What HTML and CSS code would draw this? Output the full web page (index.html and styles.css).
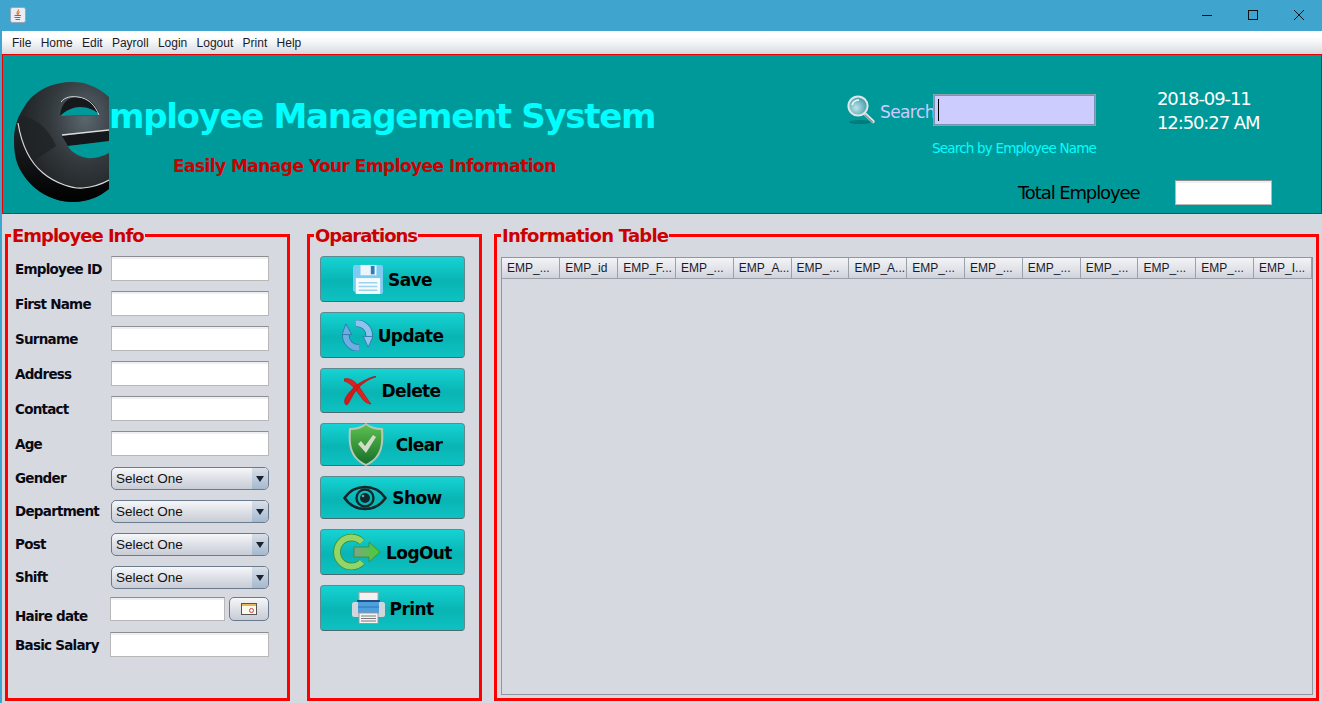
FILE: index.html
```html
<!DOCTYPE html>
<html lang="en">
<head>
    <meta charset="UTF-8">
    <title>Employee Management System</title>
    <link rel="stylesheet" href="styles.css">
</head>
<body>
    <div class="title-bar">
        <svg class="java-icon" width="16" height="16" viewBox="0 0 16 16">
            <rect x="0.5" y="0.5" width="15" height="15" rx="2" fill="#e9edf3" stroke="#9aa5b3"/>
            <path d="M8 2.5c1.5 1.5-1.5 2.5-1 4 .2.6.8 1 1 1.4-.2-1.4 1.8-2 1-3.6" fill="none" stroke="#e0702a" stroke-width="1.1"/>
            <path d="M4.5 8.5h6.5M4.5 10.5h6M5.5 12.5h4.5" stroke="#4a78a8" stroke-width="1"/>
        </svg>
        <div class="window-btns">
            <svg width="12" height="12" viewBox="0 0 12 12"><path d="M1 6.5h10" stroke="#111" fill="none"/></svg>
            <svg width="12" height="12" viewBox="0 0 12 12"><rect x="1.5" y="1.5" width="9" height="9" stroke="#111" fill="none"/></svg>
            <svg width="12" height="12" viewBox="0 0 12 12"><path d="M1 1l10 10M11 1L1 11" stroke="#111" fill="none"/></svg>
        </div>
    </div>

    <nav class="menu-bar">
        <span>File</span>
        <span>Home</span>
        <span>Edit</span>
        <span>Payroll</span>
        <span>Login</span>
        <span>Logout</span>
        <span>Print</span>
        <span>Help</span>
    </nav>

    <header class="banner">
        <svg class="logo" width="95" height="120" viewBox="0 0 95 120">
            <defs>
                <radialGradient id="logoBody" cx="0.75" cy="0.3" r="0.75">
                    <stop offset="0" stop-color="#5a666e"/>
                    <stop offset="0.5" stop-color="#33393d"/>
                    <stop offset="1" stop-color="#1c1f21"/>
                </radialGradient>
                <linearGradient id="logoBottom" x1="0" y1="0" x2="0" y2="1">
                    <stop offset="0" stop-color="#22262a"/>
                    <stop offset="1" stop-color="#000"/>
                </linearGradient>
            </defs>
            <path d="M95 15C83 4 70 0 59 0 40 0 20 7 9 27 2 38 0 48 0 58c0 14 2 24 8 33 12 19 33 29 51 29 14 0 26-5 36-13z" fill="url(#logoBody)"/>
            <path d="M5 34c14 0 30 12 37 30L12 84C3 68 1 48 5 34z" fill="#1f2326" opacity="0.8"/>
            <path d="M4 41C8 65 18 82 29 91C42 102 60 107 69 106C79 105 88 102 95 98V107C85 115 73 120 59 120 35 120 13 105 4 82 0 70-1 52 4 41z" fill="url(#logoBottom)"/>
            <path d="M46 34c1-12 7-19 18-19 10 0 18 7 22 18z" fill="#16191b"/>
            <path d="M46 34c6-6 14-9 20-9 8 0 15 3 20 8z" fill="#009999"/>
            <path d="M47 20c4-5 10-6 17-5 10 1 17 8 21 18" fill="none" stroke="#d8dcdf" stroke-width="1"/>
            <path d="M48 54l47-6v12l-41 4z" fill="#14181a"/>
            <path d="M48 53l47-5" fill="none" stroke="#d8dcdf" stroke-width="1.4"/>
            <path d="M54 64l41-5v12c-6 3-14 6-22 5-9-2-16-6-19-12z" fill="#009999"/>
            <path d="M4 41C8 65 18 82 29 91C42 102 60 107 69 106C79 105 88 102 95 98" fill="none" stroke="#d8dcdf" stroke-width="1.2"/>
        </svg>
        <div class="brand">
            <h1>mployee Management System</h1>
            <p class="tagline">Easily Manage Your Employee Information</p>
        </div>
        <div class="tools">
            <div class="tools-top">
                <div class="search-block">
                    <div class="search-row">
                        <svg width="30" height="30" viewBox="0 0 30 30">
                            <defs>
                                <radialGradient id="lens" cx="0.4" cy="0.6" r="0.7">
                                    <stop offset="0" stop-color="#bfe4ea"/>
                                    <stop offset="1" stop-color="#2f8f9e"/>
                                </radialGradient>
                            </defs>
                            <ellipse cx="14" cy="27" rx="11" ry="2" fill="#007a7a"/>
                            <path d="M18.5 18.5L27 26.5" stroke="#e3e3e3" stroke-width="3.4" stroke-linecap="round"/>
                            <path d="M19 20l7.5 7" stroke="#8a8a8a" stroke-width="1.2" stroke-linecap="round"/>
                            <circle cx="12" cy="11" r="9.6" fill="url(#lens)" stroke="#dfe6e8" stroke-width="2"/>
                            <path d="M6 10c1-3 4-5 7-5" stroke="#e8fbff" stroke-width="1.6" fill="none"/>
                        </svg>
                        <label class="search-label" for="search">Search</label>
                        <div class="search-box">
                            <input id="search" type="text">
                            <span class="caret"></span>
                        </div>
                    </div>
                    <div class="search-hint">Search by Employee Name</div>
                </div>
                <div class="clock">
                    <div>2018-09-11</div>
                    <div>12:50:27 AM</div>
                </div>
            </div>
            <div class="total-row">
                <label for="total">Total Employee</label>
                <input id="total" class="field total-field" type="text">
            </div>
        </div>
    </header>

    <main class="content">
        <fieldset class="panel panel-info">
            <legend>Employee Info</legend>
            <div class="text-rows">
                <div class="form-row"><label>Employee ID</label><input class="field" type="text"></div>
                <div class="form-row"><label>First Name</label><input class="field" type="text"></div>
                <div class="form-row"><label>Surname</label><input class="field" type="text"></div>
                <div class="form-row"><label>Address</label><input class="field" type="text"></div>
                <div class="form-row"><label>Contact</label><input class="field" type="text"></div>
                <div class="form-row"><label>Age</label><input class="field" type="text"></div>
            </div>
            <div class="combo-rows">
                <div class="form-row"><label>Gender</label><div class="combo"><span>Select One</span><b></b></div></div>
                <div class="form-row"><label>Department</label><div class="combo"><span>Select One</span><b></b></div></div>
                <div class="form-row"><label>Post</label><div class="combo"><span>Select One</span><b></b></div></div>
                <div class="form-row"><label>Shift</label><div class="combo"><span>Select One</span><b></b></div></div>
            </div>
            <div class="date-row">
                <label>Haire date</label>
                <input class="field date-field" type="text">
                <button class="date-btn" type="button">
                    <svg width="16" height="12" viewBox="0 0 16 12">
                        <rect x="0.5" y="0.5" width="15" height="11" fill="#fbf8ee" stroke="#555"/>
                        <rect x="1" y="1" width="14" height="2" fill="#e8b64c"/>
                        <circle cx="10.5" cy="7.5" r="2" fill="none" stroke="#d8383a"/>
                    </svg>
                </button>
            </div>
            <div class="salary-row">
                <label>Basic Salary</label>
                <input class="field salary-field" type="text">
            </div>
        </fieldset>

        <fieldset class="panel panel-ops">
            <legend>Oparations</legend>
            <button class="op-btn" type="button">
                <svg width="30" height="30" viewBox="0 0 32 32">
                    <path d="M2 1h28c1 0 2 1 2 2v27c0 1-1 2-2 2H4l-4-4V3c0-1 1-2 2-2z" fill="#7ccbf0"/>
                    <rect x="8" y="1" width="17" height="11" fill="#eaf6fc"/>
                    <rect x="19" y="2" width="4" height="9" fill="#2f7db8"/>
                    <rect x="3" y="15" width="26" height="17" fill="#f5fafd"/>
                    <path d="M6 20h20M6 24h20M6 28h20" stroke="#9fd2ee" stroke-width="1.4"/>
                </svg>
                <span>Save</span>
            </button>
            <button class="op-btn" type="button">
                <svg width="31" height="31" viewBox="0 0 32 32">
                    <path d="M14 3.500A12.500 12.500 0 0 1 28 17" fill="none" stroke="#2f6ea4" stroke-width="7.500"/>
                    <path d="M18 28.500A12.500 12.500 0 0 1 4 15" fill="none" stroke="#2f6ea4" stroke-width="7.500"/>
                    <path d="M14 3.500A12.500 12.500 0 0 1 28 17" fill="none" stroke="#8cc4ee" stroke-width="6"/>
                    <path d="M18 28.500A12.500 12.500 0 0 1 4 15" fill="none" stroke="#6aaee2" stroke-width="6"/>
                    <path d="M22 17h10l-5 11z" fill="#8cc4ee" stroke="#2f6ea4" stroke-width="0.800"/>
                    <path d="M0 15h10L4 4z" fill="#6aaee2" stroke="#2f6ea4" stroke-width="0.800"/>
                </svg>
                <span>Update</span>
            </button>
            <button class="op-btn btn-45" type="button">
                <svg width="32" height="30" viewBox="0 0 32 30">
                    <path d="M0 3C6 1 12 6 16 12C20 18 24 24 27 28C24 28 20 26 17 21C13 16 8 7 0 5z" fill="#e01f1f" stroke="#a01010" stroke-width="0.5"/>
                    <path d="M32 1C24 3 16 9 11 16C8 20 6 26 3 29C1 29 0 26 1 23C3 18 9 12 14 8C20 4 27 1 32 0z" fill="#d81818" stroke="#a01010" stroke-width="0.5"/>
                </svg>
                <span>Delete</span>
            </button>
            <button class="op-btn btn-43" type="button">
                <svg class="icon-tall" width="36" height="43" viewBox="0 0 36 43">
                    <defs>
                        <linearGradient id="shield" x1="0" y1="0" x2="0" y2="1">
                            <stop offset="0" stop-color="#5cc04e"/>
                            <stop offset="1" stop-color="#16702a"/>
                        </linearGradient>
                    </defs>
                    <path d="M18 0c5 4 11 5 17 5 1 15 1 30-17 38C0 35 0 20 1 5c6 0 12-1 17-5z" fill="#b8c8b8"/>
                    <path d="M18 2c5 4 10 5 15 5 1 14 0 27-15 34C3 34 2 21 3 7c5 0 10-1 15-5z" fill="url(#shield)"/>
                    <path d="M10 21l3-3 4 5 8-11 3 2-10 16z" fill="#d2ddc8"/>
                </svg>
                <span class="clear-text">Clear</span>
            </button>
            <button class="op-btn btn-43" type="button">
                <svg width="44" height="26" viewBox="0 0 44 26">
                    <path d="M1.5 13C7 5 14 2 22 2s15 3 20.5 11C37 21 30 24 22 24S7 21 1.5 13z" fill="none" stroke="#14282c" stroke-width="2.6"/>
                    <circle cx="22" cy="13" r="8.5" fill="none" stroke="#14282c" stroke-width="2.4"/>
                    <circle cx="22" cy="13" r="5" fill="#14282c"/>
                    <circle cx="20" cy="11" r="1.3" fill="#5aa"/>
                </svg>
                <span>Show</span>
            </button>
            <button class="op-btn" type="button">
                <svg width="48" height="36" viewBox="0 0 48 36">
                    <defs>
                        <linearGradient id="exitArrow" x1="0" y1="0" x2="1" y2="0">
                            <stop offset="0" stop-color="#7fa58a"/>
                            <stop offset="1" stop-color="#45cf2c"/>
                        </linearGradient>
                    </defs>
                    <path d="M29 8A14.5 14.5 0 1 0 29 28" fill="none" stroke="#3e8a30" stroke-width="7.5"/>
                    <path d="M29 8A14.5 14.5 0 1 0 29 28" fill="none" stroke="#92d668" stroke-width="6"/>
                    <path d="M21 13h15V8l11 10-11 10v-5H21z" fill="url(#exitArrow)" stroke="#3e8a30" stroke-width="0.8"/>
                </svg>
                <span>LogOut</span>
            </button>
            <button class="op-btn" type="button">
                <svg width="33" height="32" viewBox="0 0 33 32">
                    <rect x="7" y="0.5" width="19" height="10" fill="#f2f2f2" stroke="#aaa"/>
                    <rect x="5" y="8" width="23" height="12" fill="#1f4f80"/>
                    <path d="M2 10h29c1 0 2 1 2 2v11c0 1-1 2-2 2H2c-1 0-2-1-2-2V12c0-1 1-2 2-2z" fill="#d0d6dc"/>
                    <rect x="6" y="10" width="21" height="11" fill="#4e9fdc"/>
                    <path d="M6 15h21" stroke="#2f78b8"/>
                    <rect x="7" y="21" width="19" height="10.5" fill="#f4f4f4" stroke="#999"/>
                    <path d="M9 24h15M9 26.5h15M9 29h15" stroke="#777"/>
                </svg>
                <span>Print</span>
            </button>
        </fieldset>

        <fieldset class="panel panel-table">
            <legend>Information Table</legend>
            <div class="table-wrap">
                <table>
                    <thead>
                        <tr>
                            <th>EMP_...</th>
                            <th>EMP_id</th>
                            <th>EMP_F...</th>
                            <th>EMP_...</th>
                            <th>EMP_A...</th>
                            <th>EMP_...</th>
                            <th>EMP_A...</th>
                            <th>EMP_...</th>
                            <th>EMP_...</th>
                            <th>EMP_...</th>
                            <th>EMP_...</th>
                            <th>EMP_...</th>
                            <th>EMP_...</th>
                            <th>EMP_I...</th>
                        </tr>
                    </thead>
                </table>
            </div>
        </fieldset>
    </main>
</body>
</html>
```

FILE: styles.css
```css
* {
  box-sizing: border-box;
}

html,
body {
  height: 100%;
}

body {
  margin: 0;
  width: 1322px;
  height: 703px;
  overflow: hidden;
  display: flex;
  flex-direction: column;
  border-left: 2px solid #3fa5ce;
  background-color: #d6d9e0;
  font-family: "DejaVu Sans", Verdana, sans-serif;
}

/* window chrome */
.title-bar {
  height: 31px;
  margin-left: -2px;
  padding-left: 10px;
  display: flex;
  align-items: center;
  justify-content: space-between;
  background-color: #3fa5ce;
}

.java-icon {
  margin-bottom: 1px;
}

.window-btns {
  display: flex;
  gap: 34px;
  padding-right: 17px;
  margin-bottom: 1px;
}

.menu-bar {
  height: 23px;
  padding-left: 10px;
  display: flex;
  align-items: center;
  gap: 9.3px;
  font-family: "Liberation Sans", Arial, sans-serif;
  font-size: 12px;
  color: #1a1a2a;
  background: linear-gradient(#ffffff 25%, #f4f5f7 50%, #d6d9e0);
}

/* teal banner */
.banner {
  height: 160px;
  display: flex;
  border: 1px solid #ee0000;
  background-color: #009999;
}

.logo {
  margin: 27px 0 0 11px;
  flex-shrink: 0;
}

.brand {
  width: 737px;
}

.brand h1 {
  margin: 37px 0 0 0;
  font-size: 34px;
  line-height: 48px;
  font-weight: bold;
  letter-spacing: -1.3px;
  white-space: nowrap;
  color: #00ffff;
}

.tagline {
  margin: 14px 0 0 64px;
  font-size: 17px;
  line-height: 24px;
  font-weight: bold;
  letter-spacing: -0.55px;
  white-space: nowrap;
  color: #cc0000;
}

.tools {
  flex: 1;
}

.tools-top {
  display: flex;
  margin: 32px 0 0 0;
}

.search-block {
  width: 311px;
  padding-top: 7px;
}

.search-row {
  display: flex;
  align-items: center;
  height: 32px;
}

.search-label {
  margin-left: 4px;
  padding-top: 3px;
  width: 53px;
  font-size: 17px;
  letter-spacing: -0.6px;
  color: #ccccff;
}

.search-box {
  position: relative;
  width: 163px;
  height: 32px;
}

.search-box input {
  width: 100%;
  height: 100%;
  border: 2px solid #7c93ad;
  outline: 1px solid #8fa0b0;
  outline-offset: -1px;
  background-color: #ccccff;
}

.caret {
  position: absolute;
  left: 5px;
  top: 5px;
  width: 1px;
  height: 22px;
  background-color: #000;
}

.search-hint {
  margin: 12px 0 0 86px;
  font-size: 13.5px;
  line-height: 20px;
  letter-spacing: -0.8px;
  white-space: nowrap;
  color: #00ffff;
}

.clock {
  font-size: 18px;
  line-height: 24px;
  letter-spacing: -1.1px;
  white-space: nowrap;
  color: #fff;
}

.total-row {
  display: flex;
  align-items: center;
  margin: 22px 0 0 172px;
  font-size: 18px;
  letter-spacing: -1.1px;
  color: #000;
}

.total-row label {
  width: 157px;
  white-space: nowrap;
}

.total-field {
  width: 97px;
  height: 25px;
}

/* lower area */
.content {
  flex: 1;
  min-height: 0;
  display: flex;
  align-items: stretch;
  padding: 9px 3px 2px 3px;
}

.panel {
  margin: 0;
  min-width: 0;
  border: 3px solid #ff0000;
}

.panel legend {
  padding: 0 1px;
  height: 24px;
  font-size: 18px;
  line-height: 26px;
  font-weight: bold;
  letter-spacing: -1px;
  white-space: nowrap;
  color: #cc0000;
}

.panel-info {
  width: 285px;
  padding: 9px 0 0 7px;
}

.panel-info legend {
  margin-left: -4px;
}

.panel-ops {
  width: 175px;
  margin-left: 17px;
  padding: 9px 0 0 10px;
}

.panel-ops legend {
  margin-left: -6px;
}

.panel-table {
  width: 825px;
  margin-left: 12px;
  padding: 10px 0 0 4px;
}

.panel-table legend {
  letter-spacing: -0.75px;
}

.form-row {
  display: flex;
  align-items: center;
}

.form-row label,
.date-row label,
.salary-row label {
  font-size: 13.5px;
  font-weight: bold;
  letter-spacing: -0.75px;
  white-space: nowrap;
  color: #0a0a14;
}

.form-row label {
  width: 96px;
  flex-shrink: 0;
}

.field {
  border: 1px solid #b8b8b8;
  border-top-color: #8e8e8e;
  background-color: #fff;
  box-shadow: inset 0 2px 0 #eceff3;
}

.text-rows .form-row {
  height: 25px;
  margin-bottom: 10px;
}

.text-rows .field {
  width: 158px;
  height: 25px;
}

.combo-rows {
  padding-top: 1px;
}

.combo-rows .form-row {
  height: 23px;
  margin-bottom: 10px;
}

.combo-rows label {
  margin-bottom: 2px;
}

.combo {
  width: 158px;
  height: 23px;
  display: flex;
  align-items: center;
  border: 1px solid #6b7a8d;
  border-radius: 5px;
  overflow: hidden;
  font-family: "Liberation Sans", Arial, sans-serif;
  font-size: 13.5px;
  color: #111;
  background: linear-gradient(#f6f7f9, #dde0e6 50%, #c8ccd5);
}

.combo span {
  flex: 1;
  padding-left: 4px;
}

.combo b {
  width: 16px;
  height: 100%;
  display: flex;
  align-items: center;
  justify-content: center;
  background: linear-gradient(#d8dfe8, #a5b9ce);
}

.combo b::after {
  content: "";
  border-left: 4px solid transparent;
  border-right: 4px solid transparent;
  border-top: 6px solid #1a2230;
}

.date-row {
  display: flex;
  align-items: flex-start;
  margin-top: -2px;
}

.date-row label {
  width: 95px;
  margin-top: 11px;
}

.date-field {
  width: 115px;
  height: 24px;
}

.date-btn {
  width: 40px;
  height: 24px;
  margin-left: 4px;
  padding: 0;
  display: flex;
  align-items: center;
  justify-content: center;
  border: 1px solid #6b7a8d;
  border-radius: 5px;
  background: linear-gradient(#f6f7f9, #dde0e6 50%, #c8ccd5);
}

.salary-row {
  display: flex;
  align-items: center;
  margin-top: 8px;
}

.salary-row label {
  width: 95px;
}

.salary-field {
  width: 159px;
  height: 25px;
}

.op-btn {
  width: 145px;
  height: 46px;
  margin-bottom: 10px;
  padding: 0;
  display: flex;
  align-items: center;
  justify-content: center;
  gap: 5px;
  border: 1px solid #5f8a90;
  border-bottom-color: #4a6a70;
  border-radius: 4px;
  font-family: "DejaVu Sans", Verdana, sans-serif;
  font-size: 17px;
  font-weight: bold;
  letter-spacing: -0.6px;
  color: #000;
  background: linear-gradient(#16d3d3, #09b4b4 55%, #0ec2c2);
}

.op-btn span {
  padding-top: 1px;
}

.btn-45 {
  height: 45px;
}

.btn-45 span,
.btn-43 span {
  padding-top: 0;
}

.btn-43 {
  height: 43px;
}

.icon-tall {
  margin-left: 5px;
}

.clear-text {
  margin-left: 7px;
}

.table-wrap {
  width: 812px;
  height: 438px;
  border: 1px solid #92979f;
}

table {
  width: 100%;
  table-layout: fixed;
  border-collapse: collapse;
}

th {
  height: 20px;
  padding: 1px 0 0 5px;
  border-right: 1px solid #9ba1ab;
  border-bottom: 1px solid #9ba1ab;
  overflow: hidden;
  text-align: left;
  font-family: "Liberation Sans", Arial, sans-serif;
  font-size: 12px;
  font-weight: normal;
  white-space: nowrap;
  color: #1a1a2a;
  background: linear-gradient(#f2f3f6, #dfe1e7 60%, #cfd2da);
}
```
